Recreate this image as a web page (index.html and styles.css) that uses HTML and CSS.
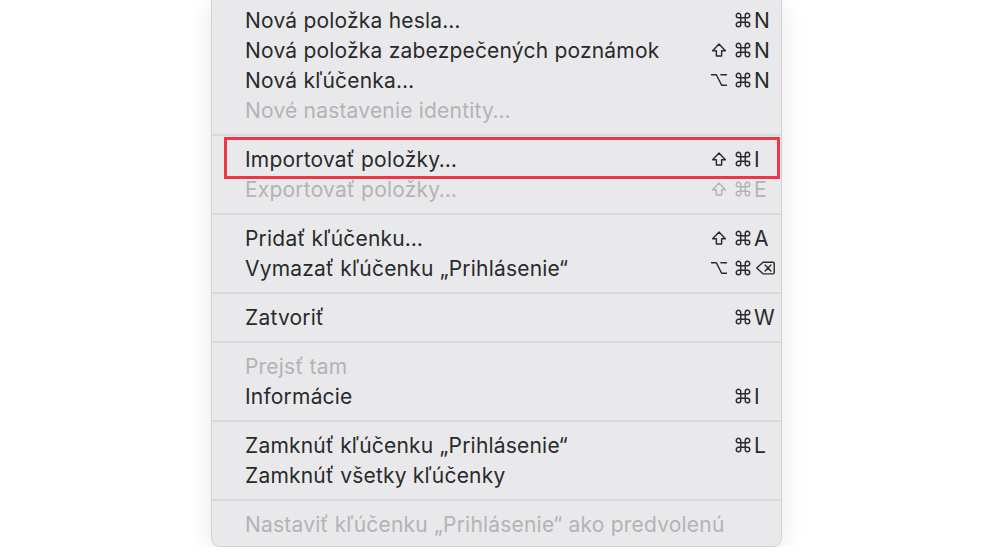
FILE: index.html
```html
<!DOCTYPE html>
<html lang="sk">
<head>
    <meta charset="UTF-8">
    <meta name="viewport" content="width=device-width, initial-scale=1.0">
    <title>Súbor</title>
    <link rel="stylesheet" href="styles.css">
</head>
<body>
    <svg class="defs" aria-hidden="true">
        <symbol id="cmd" viewBox="0 0 24 24"><path d="M15 6v12a3 3 0 1 0 3-3H6a3 3 0 1 0 3 3V6a3 3 0 1 0-3 3h12a3 3 0 1 0-3-3"/></symbol>
        <symbol id="shift" viewBox="0 0 24 24"><path d="M8.5 20v-7H3.5L12 4l8.5 9h-5v7z"/></symbol>
        <symbol id="opt" viewBox="0 0 24 24"><path d="M2 5h6.5l7 14H22M14.5 5H22"/></symbol>
        <symbol id="del" viewBox="0 0 24 24"><path d="M9 5h12a1.5 1.5 0 0 1 1.5 1.5v11A1.5 1.5 0 0 1 21 19H9l-7.5-7z"/><path d="M11.5 8.5l7 7M18.5 8.5l-7 7"/></symbol>
    </svg>

    <div class="menu">
        <div class="item">
            <span class="label">Nová položka hesla…</span>
            <span class="mods"><svg><use href="#cmd"/></svg></span><span class="key">N</span>
        </div>
        <div class="item">
            <span class="label">Nová položka zabezpečených poznámok</span>
            <span class="mods"><svg><use href="#shift"/></svg><svg><use href="#cmd"/></svg></span><span class="key">N</span>
        </div>
        <div class="item">
            <span class="label">Nová kľúčenka…</span>
            <span class="mods"><svg><use href="#opt"/></svg><svg><use href="#cmd"/></svg></span><span class="key">N</span>
        </div>
        <div class="item off"><span class="label">Nové nastavenie identity…</span></div>
        <div class="sep"></div>
        <div class="item marked">
            <span class="label">Importovať položky…</span>
            <span class="mods"><svg><use href="#shift"/></svg><svg><use href="#cmd"/></svg></span><span class="key">I</span>
        </div>
        <div class="item off">
            <span class="label">Exportovať položky…</span>
            <span class="mods"><svg><use href="#shift"/></svg><svg><use href="#cmd"/></svg></span><span class="key">E</span>
        </div>
        <div class="sep"></div>
        <div class="item">
            <span class="label">Pridať kľúčenku…</span>
            <span class="mods"><svg><use href="#shift"/></svg><svg><use href="#cmd"/></svg></span><span class="key">A</span>
        </div>
        <div class="item">
            <span class="label">Vymazať kľúčenku „Prihlásenie“</span>
            <span class="mods"><svg><use href="#opt"/></svg><svg><use href="#cmd"/></svg></span><span class="key"><svg class="bksp"><use href="#del"/></svg></span>
        </div>
        <div class="sep"></div>
        <div class="item">
            <span class="label">Zatvoriť</span>
            <span class="mods"><svg><use href="#cmd"/></svg></span><span class="key">W</span>
        </div>
        <div class="sep"></div>
        <div class="item off"><span class="label">Prejsť tam</span></div>
        <div class="item">
            <span class="label">Informácie</span>
            <span class="mods"><svg><use href="#cmd"/></svg></span><span class="key">I</span>
        </div>
        <div class="sep"></div>
        <div class="item">
            <span class="label">Zamknúť kľúčenku „Prihlásenie“</span>
            <span class="mods"><svg><use href="#cmd"/></svg></span><span class="key">L</span>
        </div>
        <div class="item"><span class="label">Zamknúť všetky kľúčenky</span></div>
        <div class="sep"></div>
        <div class="item off"><span class="label">Nastaviť kľúčenku „Prihlásenie“ ako predvolenú</span></div>
    </div>
</body>
</html>
```

FILE: styles.css
```css
body {
    margin: 0;
    padding: 0;
    background: #ffffff;
    font-family: Inter, "Noto Sans", sans-serif;
    overflow: hidden;
}

.defs {
    position: absolute;
    width: 0;
    height: 0;
}

.menu {
    margin-left: 211px;
    width: 569px;
    padding: 5px 0 7px;
    background: #e9e9eb;
    border: 1px solid #d2d2d4;
    border-top: none;
    border-radius: 0 0 9px 9px;
    box-shadow: 0 4px 24px rgba(0, 0, 0, 0.10);
}

.item {
    position: relative;
    display: grid;
    grid-template-columns: 1fr auto 29px;
    align-items: center;
    height: 30px;
    padding: 0 0 0 33px;
    font-size: 21px;
    letter-spacing: 0.2px;
    color: #2a2a2c;
}

.item.off {
    color: #b3b3b5;
}

.mods {
    display: flex;
    justify-content: flex-end;
    gap: 6px;
}

.mods svg,
.key svg {
    width: 18px;
    height: 18px;
    fill: none;
    stroke: currentColor;
    stroke-width: 1.9;
    stroke-linejoin: round;
    stroke-linecap: round;
}

.key {
    display: flex;
    align-items: center;
    padding-left: 2px;
}

.key .bksp {
    width: 23px;
    height: 20px;
    stroke-width: 1.7;
}

.sep {
    height: 2px;
    margin: 9px 0 8px;
    background: #d9d9db;
}

.marked::after {
    content: "";
    position: absolute;
    left: 12px;
    right: 1px;
    top: -7px;
    bottom: -5px;
    border: 3px solid #f0344a;
}
```
